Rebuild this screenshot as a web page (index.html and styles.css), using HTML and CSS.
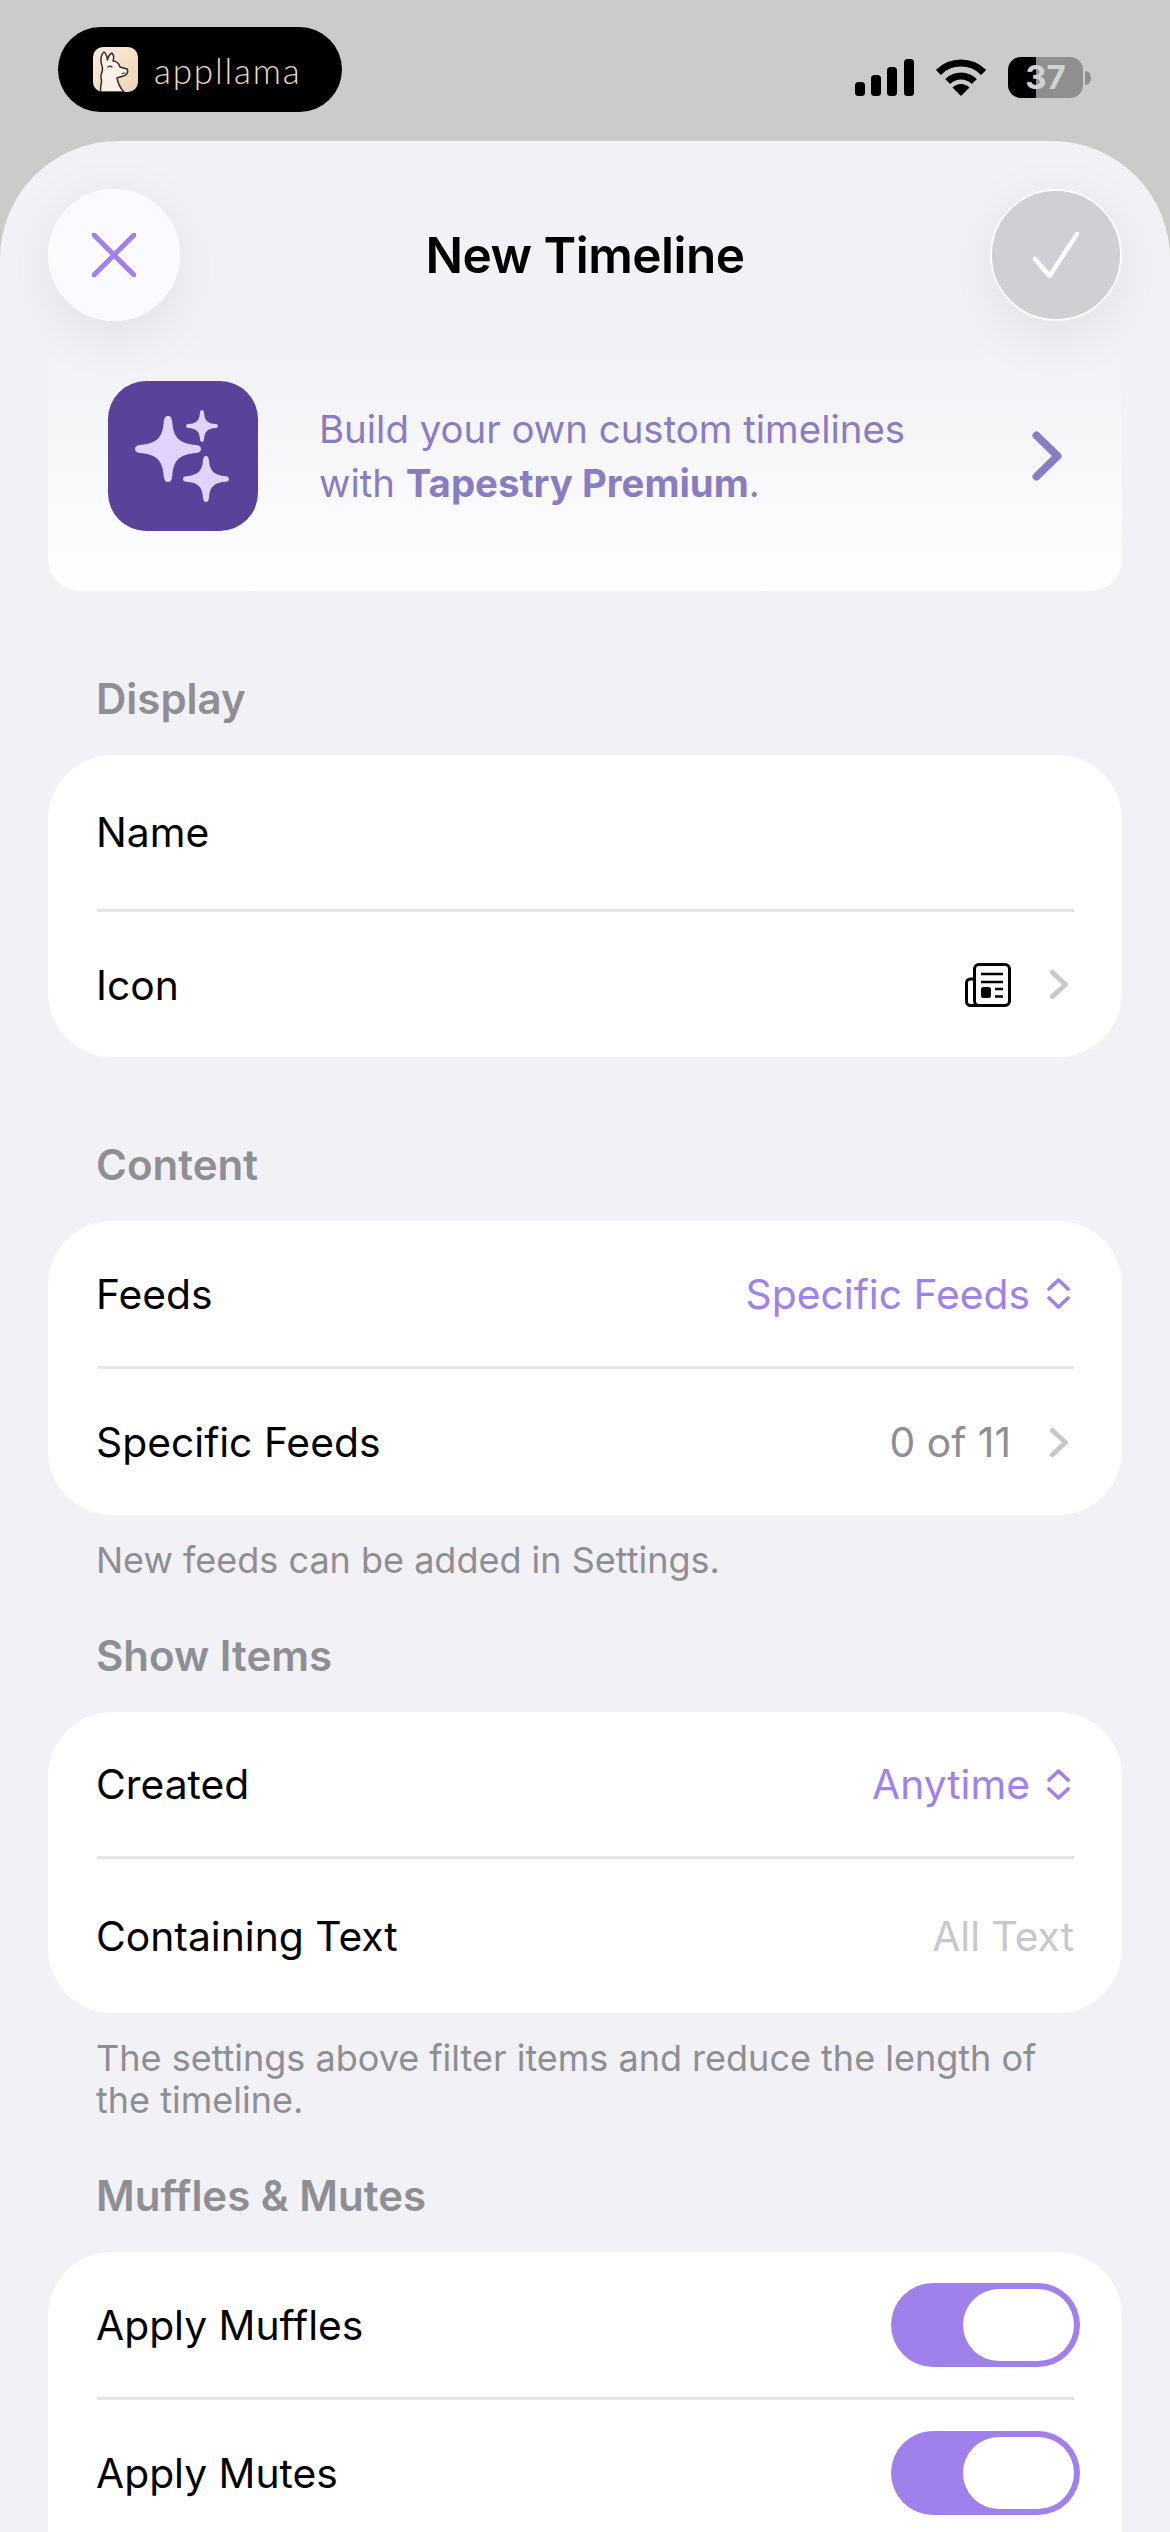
FILE: index.html
```html
<!DOCTYPE html>
<html>
<head>
  <title>New Timeline</title>
  <meta charset="UTF-8">
  <meta name="viewport" content="width=device-width, initial-scale=1.0">
  <link rel="stylesheet" href="styles.css">
</head>
<body>
  <svg class="defs" width="0" height="0">
    <symbol id="star" viewBox="-100 -100 200 200">
      <path d="M0 -100C9 -100 12 -92 13 -80C17 -34 34 -16 86 -12C95 -11 100 -7 100 0C100 7 95 11 86 12C34 16 17 34 13 80C12 92 9 100 0 100C-9 100 -12 92 -13 80C-17 34 -34 16 -86 12C-95 11 -100 7 -100 0C-100 -7 -95 -11 -86 -12C-34 -16 -17 -34 -13 -80C-12 -92 -9 -100 0 -100Z"/>
    </symbol>
    <symbol id="chev" viewBox="0 0 18 29">
      <path d="M2.5 2.5L15.5 14.500L2.500 26.500" fill="none" stroke="currentColor" stroke-width="5" stroke-linecap="round" stroke-linejoin="round"/>
    </symbol>
    <symbol id="updown" viewBox="0 0 23 31">
      <path d="M2 11L11.500 2L21 11M2 20L11.500 29L21 20" fill="none" stroke="currentColor" stroke-width="3.600" stroke-linecap="round" stroke-linejoin="round"/>
    </symbol>
  </svg>

  <div class="statusbar">
    <div class="pill">
      <svg class="llama" viewBox="0 0 45 45">
        <defs>
          <linearGradient id="llamaBg" x1="0" y1="0" x2="1" y2="1">
            <stop offset="0" stop-color="#fbeedd"/>
            <stop offset="1" stop-color="#eed4b4"/>
          </linearGradient>
        </defs>
        <rect width="45" height="45" rx="10" fill="url(#llamaBg)"/>
        <path d="M8 45C6 40 10 36 8 31C7 27 11 24 9 19C7 13 8 7 11 5C14 7 14 11 14.500 13C15 10 17 7 19 6C21 8 21 11 20 14C24 14 26 17 27 20L34 22C36 25 33 29 30 29L24 31C25 36 27 41 31 45Z" fill="#fbf1e6" stroke="#2d2d33" stroke-width="1.500" stroke-linejoin="round"/>
        <path d="M15 20Q17 18 19 20M29 26.500L32 26" fill="none" stroke="#2d2d33" stroke-width="1.200" stroke-linecap="round"/>
      </svg>
      <span class="wordmark">appllama</span>
    </div>
    <div class="status-icons">
      <svg class="signal" viewBox="0 0 59 37">
        <rect x="0" y="23" width="10" height="14" rx="3.500"/>
        <rect x="16" y="16" width="10" height="21" rx="3.500"/>
        <rect x="32" y="8" width="10" height="29" rx="3.500"/>
        <rect x="49" y="0" width="10" height="37" rx="3.500"/>
      </svg>
      <svg class="wifi" viewBox="0 0 50 37">
        <path d="M2.400 13.400A32 32 0 0 1 47.600 13.400M11.600 22.600A19 19 0 0 1 38.400 22.600" fill="none" stroke="#000" stroke-width="7"/>
        <path d="M25 37L16.500 28.500A12 12 0 0 1 33.500 28.500Z"/>
      </svg>
      <div class="battery">37</div>
      <div class="battery-nub"></div>
    </div>
  </div>

  <div class="sheet">
    <div class="nav">
      <div class="round-btn close-btn">
        <svg class="close-x" viewBox="0 0 44 44">
          <path d="M2 2L42 42M42 2L2 42" fill="none" stroke="#a081ec" stroke-width="5" stroke-linecap="round"/>
        </svg>
      </div>
      <div class="nav-title">New Timeline</div>
      <div class="round-btn done-btn">
        <svg class="check" viewBox="0 0 46 46">
          <path d="M2 27L16.500 44L44 2" fill="none" stroke="#fff" stroke-width="4.500" stroke-linecap="round" stroke-linejoin="round"/>
        </svg>
      </div>
    </div>

    <div class="promo">
      <div class="promo-icon">
        <svg class="stars" viewBox="0 0 150 150">
          <use href="#star" x="27" y="35" width="66" height="66"/>
          <use href="#star" x="78" y="29" width="32" height="32"/>
          <use href="#star" x="75" y="75" width="46" height="46"/>
        </svg>
      </div>
      <div class="promo-text">Build your own custom timelines<br>with <b>Tapestry Premium</b>.</div>
      <svg class="promo-chev" viewBox="0 0 30 50">
        <path d="M4.500 4.500L25.500 25L4.500 45.500" fill="none" stroke="#8a7cc2" stroke-width="8" stroke-linecap="round" stroke-linejoin="round"/>
      </svg>
    </div>

    <div class="section-label label-first">Display</div>
    <div class="card">
      <div class="row row-name"><span>Name</span></div>
      <div class="sep"></div>
      <div class="row row-icon">
        <span>Icon</span>
        <svg class="news" viewBox="0 0 46 44">
          <rect x="9.500" y="1.500" width="35" height="41" rx="4.500" fill="none" stroke="#000" stroke-width="3"/>
          <path d="M9.500 16H5.500A4 4 0 0 0 1.500 20V38.500A4 4 0 0 0 5.500 42.500H13" fill="none" stroke="#000" stroke-width="3"/>
          <path d="M16 11H38M16 19H38M30 26H38M30 33.500H38" stroke="#000" stroke-width="2.500"/>
          <rect x="16" y="24" width="10" height="11" rx="2.500"/>
        </svg>
        <svg class="chev"><use href="#chev"/></svg>
      </div>
    </div>

    <div class="section-label">Content</div>
    <div class="card">
      <div class="row row-feeds">
        <span>Feeds</span>
        <span class="value purple">Specific Feeds</span>
        <svg class="updown"><use href="#updown"/></svg>
      </div>
      <div class="sep"></div>
      <div class="row row-specific">
        <span>Specific Feeds</span>
        <span class="value gray">0 of 11</span>
        <svg class="chev"><use href="#chev"/></svg>
      </div>
    </div>
    <div class="footnote">New feeds can be added in Settings.</div>

    <div class="section-label">Show Items</div>
    <div class="card">
      <div class="row row-created">
        <span>Created</span>
        <span class="value purple">Anytime</span>
        <svg class="updown"><use href="#updown"/></svg>
      </div>
      <div class="sep"></div>
      <div class="row row-text">
        <span>Containing Text</span>
        <span class="value placeholder">All Text</span>
      </div>
    </div>
    <div class="footnote">The settings above filter items and reduce the length of<br>the timeline.</div>

    <div class="section-label">Muffles &amp; Mutes</div>
    <div class="card card-last">
      <div class="row row-muffles">
        <span>Apply Muffles</span>
        <div class="toggle"><div class="knob"></div></div>
      </div>
      <div class="sep"></div>
      <div class="row row-mutes">
        <span>Apply Mutes</span>
        <div class="toggle"><div class="knob"></div></div>
      </div>
    </div>
  </div>
</body>
</html>
```

FILE: styles.css
```css
html, body { margin: 0; padding: 0; }
body { width: 1170px; height: 2532px; overflow: hidden; background: #cbcbcb; font-family: Inter, "Noto Sans", sans-serif; color: #000; }
.defs { display: block; height: 0; }

/* status bar */
.statusbar { height: 141px; display: flex; align-items: flex-start; box-sizing: border-box; padding: 27px 79px 0 58px; }
.pill { width: 284px; height: 85px; border-radius: 43px; background: #000; display: flex; align-items: center; box-sizing: border-box; padding-left: 35px; }
.llama { width: 45px; height: 45px; }
.wordmark { margin-left: 16px; font-family: Lato, sans-serif; font-weight: 300; font-size: 35px; letter-spacing: 1.8px; color: #e9dac8; }
.status-icons { margin-left: auto; margin-top: 30px; display: flex; align-items: center; }
.signal { width: 59px; height: 37px; }
.wifi { width: 50px; height: 37px; margin-left: 22px; }
.battery { width: 75px; height: 41px; margin-left: 22px; border-radius: 13px; background: linear-gradient(to right, #000 37%, #8f8f8f 37%); color: #d2d2d2; font-size: 33px; font-weight: 700; line-height: 41px; text-align: center; }
.battery-nub { width: 6px; height: 14px; margin-left: 2px; border-radius: 0 7px 7px 0; background: #8f8f8f; }

/* sheet */
.sheet { height: 2391px; box-sizing: border-box; padding: 48px 48px 0; background: #f1f1f6; border-radius: 118px 118px 0 0; overflow: hidden; }
.nav { height: 132px; display: flex; align-items: center; justify-content: space-between; }
.round-btn { width: 132px; height: 132px; border-radius: 50%; box-sizing: border-box; display: flex; align-items: center; justify-content: center; box-shadow: 0 14px 60px rgba(0, 0, 0, 0.07); }
.close-btn { background: #fbfafe; border: 2px solid #fff; }
.close-x { width: 44px; height: 44px; }
.done-btn { background: #cfcfd4; border: 2px solid #fff; }
.check { width: 46px; height: 46px; }
.nav-title { font-size: 49.5px; font-weight: 600; letter-spacing: -0.5px; }

/* promo */
.promo { margin-top: 19px; height: 251px; box-sizing: border-box; padding: 41px 60px 60px; border-radius: 0 0 32px 32px; background: linear-gradient(#f1f1f6, #ffffff); display: flex; align-items: center; }
.promo-icon { width: 150px; height: 150px; border-radius: 38px; background: #5a4199; flex: none; }
.stars { width: 150px; height: 150px; fill: #e2d2ff; display: block; }
.promo-text { margin-left: 61px; font-size: 38.4px; line-height: 54px; color: #8a7cc2; }
.promo-text b { font-weight: 700; }
.promo-chev { width: 30px; height: 50px; margin-left: auto; margin-right: 0; }

/* sections */
.section-label { margin: 51px 0 32px 48px; font-size: 42px; line-height: 48px; font-weight: 600; color: #8e8e93; }
.label-first { margin-top: 84px; }
.card { background: #fff; border-radius: 64px; margin-bottom: 84px; }
.card + .footnote { margin-top: -60px; }
.card-last { margin-bottom: 0; padding-bottom: 80px; }
.footnote { margin: 0 48px 0 48px; font-size: 36px; line-height: 42px; color: #8e8e93; }

/* rows */
.row { display: flex; align-items: center; box-sizing: border-box; padding: 0 48px; font-size: 40.8px; }
.row-name { height: 154px; }
.row-icon { height: 145px; }
.row-feeds { height: 145px; }
.row-specific { height: 146px; }
.row-created { height: 144px; }
.row-text { height: 154px; }
.row-muffles { height: 145px; }
.row-mutes { height: 146px; }
.sep { height: 3px; margin: 0 48px 0 49px; background: #e6e6e8; }
.value { margin-left: auto; }
.purple { color: #a081ec; }
.gray { color: #8e8e93; }
.placeholder { color: #c7c7cc; }
.chev { width: 18px; height: 29px; margin-left: 39px; margin-right: 6px; color: #c7c7cc; }
.updown { width: 23px; height: 31px; margin-left: 17px; margin-right: 4px; color: #a081ec; }
.news { width: 46px; height: 44px; margin-left: auto; }

/* toggles */
.toggle { width: 189px; height: 84px; margin-left: auto; margin-right: -6px; border-radius: 42px; background: #a081ec; box-sizing: border-box; padding: 6px; display: flex; justify-content: flex-end; }
.knob { width: 111px; height: 72px; border-radius: 36px; background: #fff; }
```
